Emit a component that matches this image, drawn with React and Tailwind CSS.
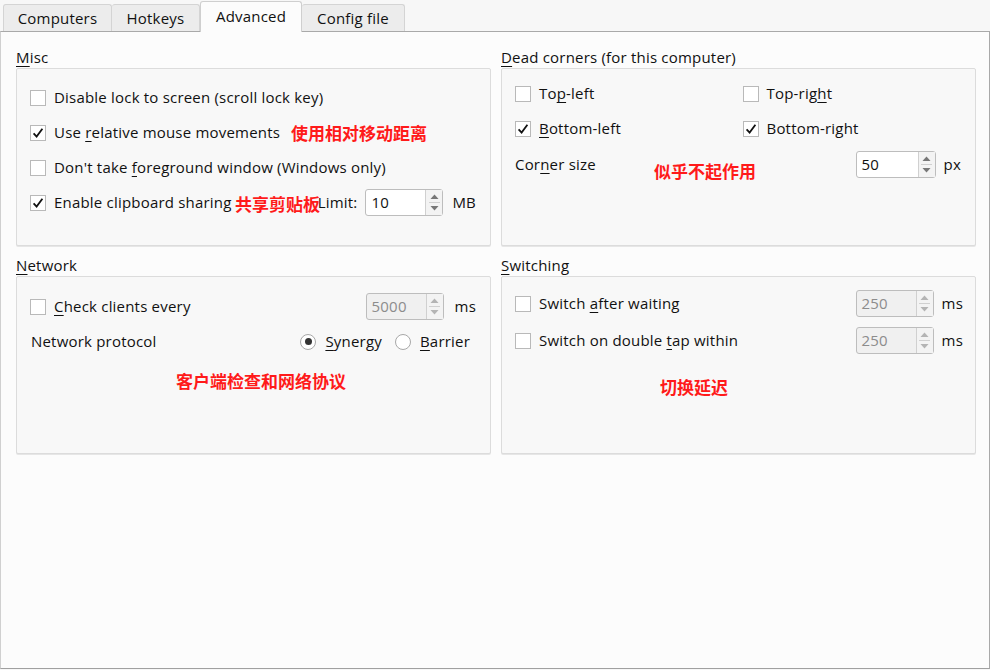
import React from 'react';

const font = { fontFamily: '"Open Sans", "Noto Sans", sans-serif' };

const U = ({ children }) => <span className="underline decoration-1 underline-offset-[3px]">{children}</span>;

const Check = ({ checked }) => (
  <span className="w-4 h-4 shrink-0 bg-white border border-[#b9b9b9] flex items-center justify-center">
    {checked && (
      <svg width="12" height="12" viewBox="0 0 12 12">
        <path d="M1.6 6.4 L4.6 9.6 L10.4 1.8" fill="none" stroke="#111" strokeWidth="1.8" />
      </svg>
    )}
  </span>
);

const Radio = ({ checked }) => (
  <span className="w-4 h-4 shrink-0 rounded-full bg-white border border-[#a8a8a8] flex items-center justify-center">
    {checked && <span className="w-[7px] h-[7px] rounded-full bg-[#333]" />}
  </span>
);

const Spin = ({ value, disabled, w = 'w-[78px]' }) => (
  <div className={`${w} h-[27px] flex border border-[#bdbdbd] rounded-[3px] ${disabled ? 'bg-[#f0f0f0] text-[#8c8c8c]' : 'bg-white text-[#111]'}`}>
    <div className="flex-1 flex items-center pl-[5px]">{value}</div>
    <div className="w-[17px] flex flex-col items-center justify-center gap-[3px] border-l border-[#d0d0d0] bg-[#f3f3f3]">
      <svg width="9" height="5" viewBox="0 0 9 5"><path d="M0.5 5 L4.5 0.5 L8.5 5 Z" fill={disabled ? '#b4b4b4' : '#777'} /></svg>
      <div className="w-[11px] h-px bg-[#d0d0d0]" />
      <svg width="9" height="5" viewBox="0 0 9 5"><path d="M0.5 0 L4.5 4.5 L8.5 0 Z" fill={disabled ? '#b4b4b4' : '#777'} /></svg>
    </div>
  </div>
);

const Note = ({ children, className }) => (
  <span
    className={`absolute text-[17px] font-bold text-[#ff1a1a] leading-none whitespace-nowrap tracking-normal ${className}`}
    style={{ fontFamily: '"Noto Sans CJK SC", sans-serif' }}
  >
    {children}
  </span>
);

const Group = ({ title, children, className = '' }) => (
  <div className="flex flex-col">
    <div className="h-[21px] leading-[20px]">{title}</div>
    <div className={`relative h-[178px] bg-[#f8f8f8] border border-[#dcdcdc] rounded-[2px] shadow-[0_1px_0_#e6e6e6] ${className}`}>
      {children}
    </div>
  </div>
);

const tabs = ['Computers', 'Hotkeys', 'Advanced', 'Config file'];
const tabW = ['w-[109px]', 'w-[88px]', 'w-[102px]', 'w-[103px]'];

export default function App() {
  return (
    <div className="w-[990px] h-[670px] bg-[#f7f7f7] text-[15px] tracking-[0.2px] text-[#111] flex flex-col" style={font}>
      {/* tab strip */}
      <div className="h-[31px] flex items-end pl-[3px] shrink-0">
        {tabs.map((t, i) =>
          i === 2 ? (
            <div key={t} className={`${tabW[i]} h-[31px] -mb-px bg-[#fcfcfc] border border-b-0 border-[#cfcfcf] rounded-t-[3px] flex items-center justify-center pb-[2px] z-10`}>
              {t}
            </div>
          ) : (
            <div key={t} className={`${tabW[i]} h-[27px] bg-[#ececec] border border-b-0 border-[#d4d4d4] rounded-t-[3px] flex items-center justify-center pt-[1px] ${i === 1 ? 'border-l-0' : ''} ${i === 3 ? 'border-l-0' : ''}`}>
              {t}
            </div>
          )
        )}
      </div>

      {/* pane */}
      <div className="w-[990px] h-[638px] bg-[#fcfcfc] border border-t-[#a9a9a9] border-l-[#d0d0d0] border-r-[#a9a9a9] border-b-[#a0a0a0] pt-[15px] pl-[15px] pr-[13px]">
        <div className="grid grid-cols-2 gap-x-[10px] gap-y-[9px]">
          <Group title={<><U>M</U>isc</>} className="pt-[11px] pl-[13px] pr-[14px]">
            <div className="h-[35px] flex items-center gap-2"><Check /><span>Disable lock to screen (scroll lock key)</span></div>
            <div className="h-[35px] flex items-center gap-2"><Check checked /><span>Use <U>r</U>elative mouse movements</span></div>
            <div className="h-[35px] flex items-center gap-2"><Check /><span>Don't take <U>f</U>oreground window (Windows only)</span></div>
            <div className="h-[35px] flex items-center gap-2">
              <Check checked />
              <span>Enable clipboard sharing</span>
              <span className="ml-auto">Limit:</span>
              <Spin value="10" />
              <span className="ml-[1px]">MB</span>
            </div>
            <Note className="left-[274px] top-[55px]">使用相对移动距离</Note>
            <Note className="left-[218px] top-[126px]">共享剪贴板</Note>
          </Group>

          <Group title={<><U>D</U>ead corners (for this computer)</>} className="pt-[7px] pl-[13px] pr-[13px]">
            <div className="grid grid-cols-2">
              <div className="h-[35px] flex items-center gap-2"><Check /><span>To<U>p</U>-left</span></div>
              <div className="h-[35px] flex items-center gap-2 pl-[4px]"><Check /><span>Top-rig<U>h</U>t</span></div>
              <div className="h-[35px] flex items-center gap-2"><Check checked /><span><U>B</U>ottom-left</span></div>
              <div className="h-[35px] flex items-center gap-2 pl-[4px]"><Check checked /><span>Bottom-right</span></div>
            </div>
            <div className="h-[37px] flex items-center">
              <span>Cor<U>n</U>er size</span>
              <div className="ml-auto flex items-center gap-[8px]">
                <Spin value="50" w="w-[80px]" />
                <span className="mr-px">px</span>
              </div>
            </div>
            <Note className="left-[152px] top-[93px]">似乎不起作用</Note>
          </Group>

          <Group title={<><U>N</U>etwork</>} className="pt-[12px] pl-[13px] pr-[14px]">
            <div className="h-[35px] flex items-center gap-2">
              <Check />
              <span>
                <U>C</U>heck clients every
              </span>
              <div className="ml-auto flex items-center gap-[11px]">
                <Spin value="5000" disabled />
                <span>ms</span>
              </div>
            </div>
            <div className="h-[35px] flex items-center">
              <span className="pl-px">Network protocol</span>
              <div className="ml-auto mr-[6px] flex items-center gap-[9px]">
                <Radio checked />
                <span className="mr-[4px]"><U>S</U>ynergy</span>
                <Radio />
                <span><U>B</U>arrier</span>
              </div>
            </div>
            <Note className="left-[159px] top-[95px]">客户端检查和网络协议</Note>
          </Group>

          <Group title={<><U>S</U>witching</>} className="pt-[8px] pl-[13px] pr-[12px]">
            <div className="h-[37px] flex items-center gap-2">
              <Check />
              <span>Switch <U>a</U>fter waiting</span>
              <div className="ml-auto flex items-center gap-[8px]">
                <Spin value="250" disabled />
                <span>ms</span>
              </div>
            </div>
            <div className="h-[37px] flex items-center gap-2">
              <Check />
              <span>Switch on double <U>t</U>ap within</span>
              <div className="ml-auto flex items-center gap-[8px]">
                <Spin value="250" disabled />
                <span>ms</span>
              </div>
            </div>
            <Note className="left-[158px] top-[101px]">切换延迟</Note>
          </Group>
        </div>
      </div>
    </div>
  );
}
